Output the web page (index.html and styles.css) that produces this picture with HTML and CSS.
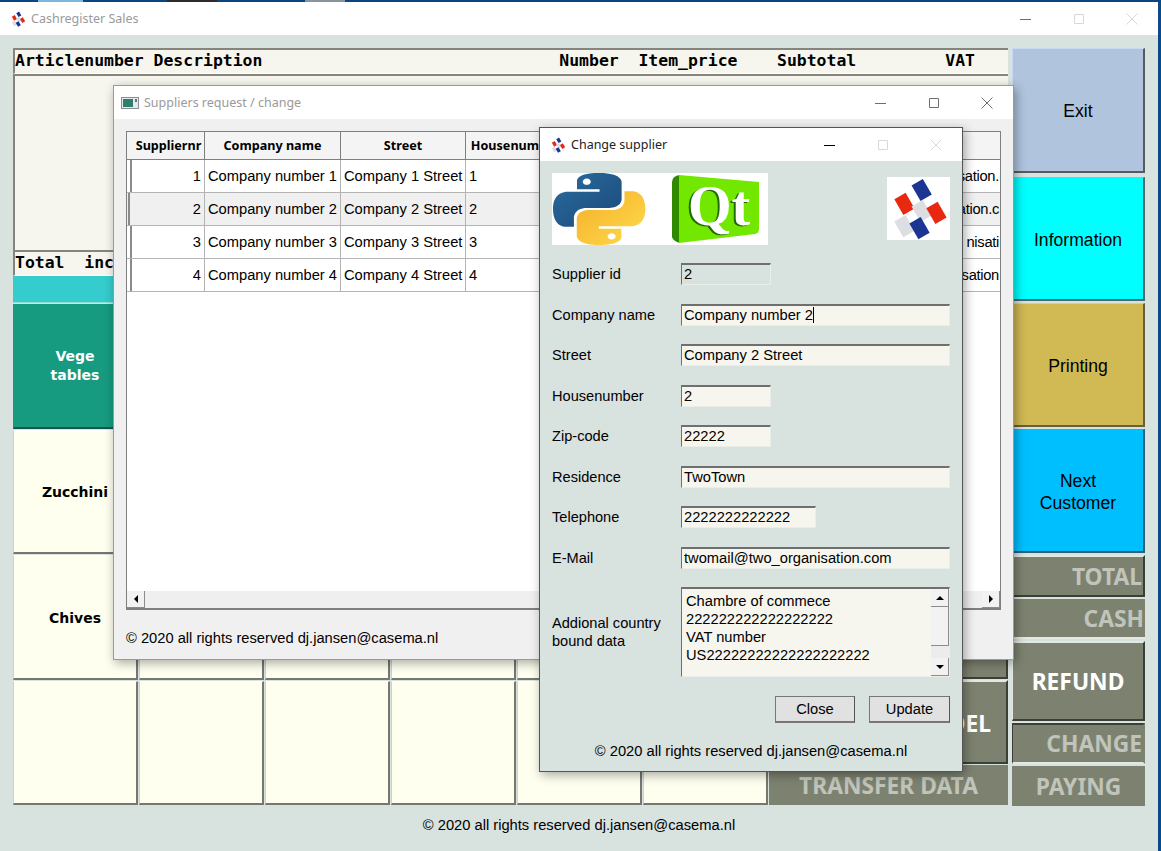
FILE: index.html
```html
<!DOCTYPE html>
<html lang="en">
<head>
    <meta charset="UTF-8">
    <title>Cashregister Sales</title>
    <link rel="stylesheet" href="styles.css">
</head>
<body>

    <svg class="defs" width="0" height="0">
        <symbol id="cash-logo" viewBox="0 0 63 63">
            <rect x="28" y="4" width="13" height="18" fill="#1c3594" transform="rotate(-30 34.7 12.7)"/>
            <rect x="11" y="18" width="13" height="18" fill="#e8290f" transform="rotate(-30 17.3 27)"/>
            <rect x="28" y="25" width="13" height="18" fill="#dcdee2" transform="rotate(-30 34.7 33.7)"/>
            <rect x="43" y="27" width="13" height="18" fill="#e8290f" transform="rotate(-30 49.3 36)"/>
            <rect x="11" y="40" width="13" height="18" fill="#dcdee2" transform="rotate(-30 17.7 49.3)"/>
            <rect x="26" y="42" width="13" height="18" fill="#1c3594" transform="rotate(-30 32.7 51)"/>
        </symbol>
        <symbol id="ctl-min" viewBox="0 0 12 12"><path d="M0 6.5H11" stroke="currentColor" fill="none"/></symbol>
        <symbol id="ctl-max" viewBox="0 0 12 12"><path d="M1.5 1.5H10.5V10.5H1.5Z" stroke="currentColor" fill="none"/></symbol>
        <symbol id="ctl-close" viewBox="0 0 12 12"><path d="M.5 .5L11.5 11.5M11.5 .5L.5 11.5" stroke="currentColor" fill="none"/></symbol>
    </svg>

    <div class="taskbar-strip">
        <span class="strip-a"></span>
        <span class="strip-b"></span>
        <span class="strip-a"></span>
        <span class="strip-c"></span>
        <span class="strip-a"></span>
        <span class="strip-d"></span>
        <span class="strip-a grow"></span>
    </div>

    <div class="screen">
        <div class="main-window">
            <div class="titlebar inactive">
                <svg class="title-icon"><use href="#cash-logo"/></svg>
                <span class="title-text">Cashregister Sales</span>
                <div class="controls">
                    <span class="ctl"><svg><use href="#ctl-min"/></svg></span>
                    <span class="ctl faint"><svg><use href="#ctl-max"/></svg></span>
                    <span class="ctl faint"><svg><use href="#ctl-close"/></svg></span>
                </div>
            </div>

            <div class="register">
                <div class="left-col">
                    <div class="mono-line">Articlenumber Description                              Number  Item_price    Subtotal         VAT</div>
                    <div class="order-list"></div>
                    <div class="mono-line">Total  inc</div>
                    <div class="scan-bar"></div>
                    <div class="products">
                        <div class="prod teal">Vege<br>tables</div>
                        <div class="prod"></div>
                        <div class="prod"></div>
                        <div class="prod"></div>
                        <div class="prod"></div>
                        <div class="prod"></div>
                        <div class="actions">
                            <div class="act"></div>
                            <div class="act"></div>
                            <div class="act"></div>
                            <div class="act"></div>
                            <div class="act"></div>
                            <div class="act"></div>
                            <div class="act"></div>
                            <div class="act bright del">DEL</div>
                            <div class="act flat wide">TRANSFER DATA</div>
                        </div>
                        <div class="prod">Zucchini</div>
                        <div class="prod"></div>
                        <div class="prod"></div>
                        <div class="prod"></div>
                        <div class="prod"></div>
                        <div class="prod"></div>
                        <div class="prod">Chives</div>
                        <div class="prod"></div>
                        <div class="prod"></div>
                        <div class="prod"></div>
                        <div class="prod"></div>
                        <div class="prod"></div>
                        <div class="prod"></div>
                        <div class="prod"></div>
                        <div class="prod"></div>
                        <div class="prod"></div>
                        <div class="prod"></div>
                        <div class="prod"></div>
                    </div>
                </div>

                <div class="right-col">
                    <div class="side exit">Exit</div>
                    <div class="side info">Information</div>
                    <div class="side print">Printing</div>
                    <div class="side next">Next<br>Customer</div>
                    <div class="act right">TOTAL</div>
                    <div class="act right lit">CASH</div>
                    <div class="act bright">REFUND</div>
                    <div class="act right sunk">CHANGE</div>
                    <div class="act flat">PAYING</div>
                </div>
            </div>

            <div class="copyright">© 2020 all rights reserved dj.jansen@casema.nl</div>
        </div>
    </div>

    <!-- Suppliers window -->
    <div class="window suppliers">
        <div class="titlebar inactive">
            <svg class="title-icon" viewBox="0 0 18 16">
                <rect x=".5" y="2.5" width="17" height="11" fill="#e8e8e8" stroke="#8a8f94"/>
                <rect x="2" y="4" width="10" height="8" fill="#2f7f6f"/>
                <rect x="14" y="4" width="2" height="3" fill="#3a7fa8"/>
            </svg>
            <span class="title-text">Suppliers request / change</span>
            <div class="controls">
                <span class="ctl"><svg><use href="#ctl-min"/></svg></span>
                <span class="ctl"><svg><use href="#ctl-max"/></svg></span>
                <span class="ctl"><svg><use href="#ctl-close"/></svg></span>
            </div>
        </div>
        <div class="suppliers-body">
            <div class="grid-table">
                <div class="tbl-head">
                    <div class="th c1">Suppliernr</div>
                    <div class="th c2">Company name</div>
                    <div class="th c3">Street</div>
                    <div class="th c4">Housenumber</div>
                    <div class="th c5"></div>
                </div>
                <div class="tbl-row">
                    <div class="td c1 num">1</div>
                    <div class="td c2">Company number 1</div>
                    <div class="td c3">Company 1 Street</div>
                    <div class="td c4">1</div>
                    <div class="td c5">sation.</div>
                </div>
                <div class="tbl-row selected">
                    <div class="td c1 num">2</div>
                    <div class="td c2">Company number 2</div>
                    <div class="td c3">Company 2 Street</div>
                    <div class="td c4">2</div>
                    <div class="td c5">ation.c</div>
                </div>
                <div class="tbl-row">
                    <div class="td c1 num">3</div>
                    <div class="td c2">Company number 3</div>
                    <div class="td c3">Company 3 Street</div>
                    <div class="td c4">3</div>
                    <div class="td c5">nisati</div>
                </div>
                <div class="tbl-row">
                    <div class="td c1 num">4</div>
                    <div class="td c2">Company number 4</div>
                    <div class="td c3">Company 4 Street</div>
                    <div class="td c4">4</div>
                    <div class="td c5">sation</div>
                </div>
                <div class="tbl-fill"></div>
                <div class="hscroll">
                    <span class="sbtn"><i class="arrow-left"></i></span>
                    <span class="sbtn"><i class="arrow-right"></i></span>
                </div>
            </div>
            <div class="suppliers-foot">© 2020 all rights reserved dj.jansen@casema.nl</div>
        </div>
    </div>

    <!-- Change supplier dialog -->
    <div class="window dialog">
        <div class="titlebar">
            <svg class="title-icon"><use href="#cash-logo"/></svg>
            <span class="title-text">Change supplier</span>
            <div class="controls">
                <span class="ctl dark"><svg><use href="#ctl-min"/></svg></span>
                <span class="ctl faint"><svg><use href="#ctl-max"/></svg></span>
                <span class="ctl faint"><svg><use href="#ctl-close"/></svg></span>
            </div>
        </div>
        <div class="dialog-body">
            <div class="logos">
                <svg class="logo-pair" viewBox="0 0 216 72">
                    <defs>
                        <linearGradient id="py-blue" x1="0" y1="0" x2="1" y2="1">
                            <stop offset="0" stop-color="#2a6ba0"/>
                            <stop offset="1" stop-color="#1b4a78"/>
                        </linearGradient>
                        <linearGradient id="py-yellow" x1="0" y1="0" x2="1" y2="1">
                            <stop offset="0" stop-color="#ffdc4a"/>
                            <stop offset="1" stop-color="#f4ae2c"/>
                        </linearGradient>
                    </defs>
                    <rect width="216" height="72" fill="#fff"/>
                    <g transform="translate(1 0) scale(.84 .655)">
                        <path fill="url(#py-blue)" d="M54.9 0c-28 0-26.3 12.2-26.3 12.2l0 12.6h26.8v3.8H17.9S0 26.6 0 54.9c0 28.3 15.6 27.3 15.6 27.3h9.3V69s-.5-15.6 15.4-15.6h26.5s14.9.2 14.9-14.4V14.9S84 0 54.9 0zm-14.7 8.5c2.7 0 4.8 2.2 4.8 4.8s-2.2 4.8-4.8 4.8-4.8-2.2-4.8-4.8 2.1-4.8 4.8-4.8z"/>
                        <path fill="url(#py-yellow)" transform="rotate(180 55 55)" d="M54.9 0c-28 0-26.3 12.2-26.3 12.2l0 12.6h26.8v3.8H17.9S0 26.6 0 54.9c0 28.3 15.6 27.3 15.6 27.3h9.3V69s-.5-15.6 15.4-15.6h26.5s14.9.2 14.9-14.4V14.9S84 0 54.9 0zm-14.7 8.5c2.7 0 4.8 2.2 4.8 4.8s-2.2 4.8-4.8 4.8-4.8-2.2-4.8-4.8 2.1-4.8 4.8-4.8z"/>
                    </g>
                    <path d="M120 9Q120 3 128 2V70Q121 68 120 64Z" fill="#2f8a00"/>
                    <path d="M127 2L207 9V56Q207 60 203 61L127 70Z" fill="#72e800"/>
                    <text class="qt-shadow" x="134" y="53">Qt</text>
                    <text class="qt-text" x="136" y="52">Qt</text>
                </svg>
                <div class="logo-box"><svg><use href="#cash-logo"/></svg></div>
            </div>

            <div class="form">
                <div class="lbl">Supplier id</div>
                <div class="field readonly w-id">2</div>
                <div class="lbl">Company name</div>
                <div class="field w-full"><span class="caret">Company number 2</span></div>
                <div class="lbl">Street</div>
                <div class="field w-full">Company 2 Street</div>
                <div class="lbl">Housenumber</div>
                <div class="field w-id">2</div>
                <div class="lbl">Zip-code</div>
                <div class="field w-id">22222</div>
                <div class="lbl">Residence</div>
                <div class="field w-full">TwoTown</div>
                <div class="lbl">Telephone</div>
                <div class="field w-tel">2222222222222</div>
                <div class="lbl">E-Mail</div>
                <div class="field w-full">twomail@two_organisation.com</div>
                <div class="lbl multi">Addional country<br>bound data</div>
                <div class="memo">
                    <div class="memo-text">Chambre of commece<br>222222222222222222<br>VAT number<br>US22222222222222222222</div>
                    <div class="vscroll">
                        <span class="sbtn tall"><i class="arrow-up"></i></span>
                        <span class="thumb"></span>
                        <span class="vtrack"></span>
                        <span class="sbtn tall"><i class="arrow-down"></i></span>
                    </div>
                </div>
            </div>

            <div class="buttons">
                <div class="btn">Close</div>
                <div class="btn default">Update</div>
            </div>
            <div class="dialog-foot">© 2020 all rights reserved dj.jansen@casema.nl</div>
        </div>
    </div>

</body>
</html>
```

FILE: styles.css
```css
:root
{
    --panel: #d8e2df;
    --olive: #7d8270;
    --cream: #fffff0;
    --linen: #f6f6ee;
    --dim: #c0c4ba;
}

*
{
    box-sizing: border-box;
    padding: 0;
    margin: 0;
}

body
{
    width: 1161px;
    height: 851px;
    overflow: hidden;
    position: relative;
    font-family: "Liberation Sans", Arial, sans-serif;
    font-size: 14.7px;
    color: #000;
    background-color: #0b4a8a;
}

.defs
{
    position: absolute;
}

.taskbar-strip
{
    display: flex;
    height: 2px;
}

.taskbar-strip span { display: block; }
.strip-a { background-color: #0c4382; width: 38px; }
.strip-b { background-color: #7fb4dc; width: 45px; }
.strip-a:nth-child(3) { width: 84px; }
.strip-c { background-color: #2c2c2c; width: 50px; }
.strip-a:nth-child(5) { width: 88px; }
.strip-d { background-color: #8a94a0; width: 40px; }
.taskbar-strip .grow { flex: 1; }

.screen
{
    width: 1158px;
    height: 849px;
}

.main-window
{
    display: flex;
    flex-flow: column nowrap;
    height: 100%;
    background-color: var(--panel);
}

/* title bars */

.titlebar
{
    display: flex;
    align-items: center;
    flex: none;
    height: 33px;
    padding-left: 10px;
    background-color: #fff;
}

.title-icon
{
    width: 16px;
    height: 16px;
    flex: none;
}

.title-text
{
    margin-left: 5px;
    font-family: "Noto Sans", sans-serif;
    font-size: 12.5px;
    color: #222;
}

.inactive .title-text { color: #9a9a9a; }

.controls
{
    display: flex;
    margin-left: auto;
}

.ctl
{
    display: flex;
    justify-content: center;
    align-items: center;
    width: 53px;
    color: #6e6e6e;
}

.ctl svg
{
    width: 12px;
    height: 12px;
}

.ctl.dark { color: #000; }
.ctl.faint { color: #d8d8d8; }

/* register */

.register
{
    display: flex;
    gap: 4px;
    padding: 13px 0 0 13px;
}

.left-col
{
    display: flex;
    flex-flow: column nowrap;
    width: 995px;
}

.mono-line
{
    height: 26px;
    overflow: hidden;
    white-space: pre;
    font-family: "DejaVu Sans Mono", monospace;
    font-size: 16.45px;
    font-weight: bold;
    line-height: 22px;
    background-color: var(--linen);
    border-top: 2px solid #85857d;
    border-left: 2px solid #85857d;
    border-bottom: 1px solid #fff;
}

.order-list
{
    height: 176px;
    background-color: var(--linen);
    border-top: 2px solid #85857d;
    border-left: 2px solid #85857d;
}

.scan-bar
{
    height: 27px;
    background-color: #34cccc;
    border-bottom: 1px solid #8fdcd8;
}

.products
{
    display: grid;
    grid-template-columns: repeat(6, 125px) 1fr;
    grid-template-rows: repeat(4, 124.5px);
    gap: 1px;
    margin-top: 1px;
}

.prod
{
    display: flex;
    justify-content: center;
    align-items: center;
    padding-top: 3px;
    text-align: center;
    font-family: "DejaVu Sans", sans-serif;
    font-size: 14px;
    font-weight: bold;
    line-height: 19px;
    background-color: var(--cream);
    border-top: 1px solid #fff;
    border-left: 1px solid #d0d0c8;
    border-right: 2px solid #77776f;
    border-bottom: 2px solid #77776f;
}

.prod.teal
{
    padding-top: 1px;
    color: #fff;
    background-color: #169a80;
    border-color: #169a80;
    border-bottom-color: #14574b;
}

.actions
{
    grid-column: 7;
    grid-row: 1 / span 4;
    align-self: start;
    display: grid;
    grid-template-columns: 1fr 1fr;
    grid-template-rows: 124px 124px 125px 84px 40px;
    gap: 1px;
}

.act
{
    display: flex;
    justify-content: center;
    align-items: center;
    font-family: "Noto Sans", sans-serif;
    font-size: 22.8px;
    font-weight: bold;
    color: var(--dim);
    background-color: var(--olive);
    border-top: 2px solid #e4e8e2;
    border-left: 1px solid #e4e8e2;
    border-right: 2px solid #3c3f35;
    border-bottom: 2px solid #3c3f35;
}

.act.bright { color: #fff; }
.act.flat { border: 0; }
.act.wide { grid-column: 1 / span 2; }

.act.del
{
    justify-content: flex-end;
    padding-right: 15px;
    padding-top: 3px;
}

.act.right
{
    justify-content: flex-end;
    padding-right: 1px;
}

.act.lit
{
    border-top: 0;
    border-left: 0;
    border-right: 0;
    border-bottom-color: #e4e8e2;
}

.act.sunk
{
    border-top-color: #3c3f35;
    border-left-color: #3c3f35;
    border-right-color: var(--olive);
    border-bottom-color: #e4e8e2;
}

.right-col
{
    display: grid;
    grid-template-rows: 127px 124px 124px 124px 42px 40px 80px 41px 40px;
    gap: 2px;
    width: 133px;
}

.side
{
    display: flex;
    justify-content: center;
    align-items: center;
    padding-top: 2px;
    text-align: center;
    font-size: 17.6px;
    line-height: 22px;
    border-top: 1px solid #c8d8ee;
    border-left: 1px solid #c8d8ee;
    border-right: 2px solid #555b60;
    border-bottom: 2px solid #555b60;
}

.exit { background-color: #b0c4de; margin-bottom: 2px; }
.info { background-color: #00ffff; border-color: #00ffff #4d6a6a #4d6a6a #00ffff; }
.print { background-color: #d1b954; border-color: #e0d088 #66603c #66603c #e0d088; }
.next { background-color: #00bfff; border-color: #00bfff #2c5f78 #2c5f78 #00bfff; }

.copyright
{
    margin-top: 11px;
    text-align: center;
}

/* floating windows */

.window
{
    position: absolute;
    display: flex;
    flex-flow: column nowrap;
    border: 1px solid #9a9a9a;
    box-shadow: 2px 3px 10px rgba(0, 0, 0, 0.35);
}

.suppliers
{
    left: 113px;
    top: 85px;
    width: 901px;
    height: 575px;
}

.suppliers .titlebar { padding-left: 7px; }
.suppliers .title-icon { width: 18px; }

.suppliers-body
{
    flex: 1;
    display: flex;
    flex-flow: column nowrap;
    padding: 12px 12px 0 12px;
    background-color: #f0f0f0;
}

.grid-table
{
    display: flex;
    flex-flow: column nowrap;
    height: 479px;
    background-color: #fff;
    border: 1px solid #7f7f7f;
    border-bottom-width: 2px;
}

.tbl-head,
.tbl-row
{
    display: flex;
    flex: none;
}

.tbl-head
{
    height: 28px;
    padding-left: 3px;
    background-color: #f4f4f4;
    border-bottom: 1px solid #7f7f7f;
}

.th
{
    display: flex;
    justify-content: center;
    align-items: center;
    overflow: hidden;
    white-space: nowrap;
    font-family: "Noto Sans", sans-serif;
    font-size: 12.6px;
    font-weight: bold;
    border-right: 1px solid #7f7f7f;
}

.th.c1 { padding-left: 3px; }
.th.c5 { border-right: 0; }

.tbl-row
{
    height: 33px;
    padding-left: 3px;
    border-bottom: 1px solid #b4b4b4;
}

.tbl-row.selected
{
    padding-left: 1px;
    background-color: #f0f0f0;
}

.td
{
    display: flex;
    align-items: center;
    overflow: hidden;
    white-space: nowrap;
    padding: 0 3px;
    border-right: 1px solid #b4b4b4;
}

.td.num { justify-content: flex-end; }
.td.c1 { border-left: 2px solid #8a8a8a; }
.selected .td.c1 { width: 77px; }
.td.c5 { justify-content: flex-end; border-right: 0; padding-right: 1px; letter-spacing: -0.3px; }

.c1 { width: 75px; }
.c2 { width: 136px; }
.c3 { width: 125px; }
.c4 { width: 100px; flex: none; }
.c5 { width: 434px; flex: none; }

.tbl-fill { flex: 1; }

.hscroll
{
    display: flex;
    justify-content: space-between;
    flex: none;
    height: 17px;
    background-color: #efefef;
}

.sbtn
{
    display: flex;
    justify-content: center;
    align-items: center;
    width: 18px;
    height: 17px;
    background-color: #f2f2f2;
    border-right: 1px solid #8c8c8c;
    border-bottom: 1px solid #8c8c8c;
}

.arrow-left,
.arrow-right,
.arrow-up,
.arrow-down
{
    display: block;
    width: 0;
    height: 0;
    border: 4px solid transparent;
}

.arrow-left { border-right-color: #000; border-left-width: 0; }
.arrow-right { border-left-color: #000; border-right-width: 0; }
.arrow-up { border-bottom-color: #000; border-top-width: 0; }
.arrow-down { border-top-color: #000; border-bottom-width: 0; }

.suppliers-foot
{
    margin-top: 20px;
}

.dialog
{
    left: 539px;
    top: 127px;
    width: 424px;
    height: 645px;
    border-color: #555;
}

.dialog-body
{
    flex: 1;
    display: flex;
    flex-flow: column nowrap;
    padding: 12px 12px 0 12px;
    background-color: var(--panel);
}

.logos
{
    display: flex;
    justify-content: space-between;
    align-items: flex-start;
    height: 90px;
}

.logo-pair
{
    width: 216px;
    height: 72px;
}

.logo-box
{
    width: 63px;
    height: 63px;
    margin-top: 4px;
    background-color: #fff;
}

.logo-box svg
{
    display: block;
    width: 63px;
    height: 63px;
}

.qt-text,
.qt-shadow
{
    font-family: "Liberation Serif", serif;
    font-size: 56px;
    font-weight: bold;
}

.qt-text { fill: #fff; }
.qt-shadow { fill: #1f6b00; }

.form
{
    display: grid;
    grid-template-columns: 129px 1fr;
    grid-auto-rows: 22px;
    row-gap: 18.5px;
    align-items: center;
}

.lbl
{
    font-size: 14.6px;
}

.lbl.multi { align-self: start; padding-top: 27px; line-height: 18px; }

.field
{
    height: 22px;
    padding-left: 2px;
    line-height: 19px;
    background-color: var(--linen);
    border-top: 2px solid #6f6f6f;
    border-left: 1px solid #6f6f6f;
    border-right: 1px solid #e9eee8;
    border-bottom: 1px solid #e9eee8;
}

.field.readonly { background-color: var(--panel); }
.w-id { width: 90px; }
.w-tel { width: 135px; }
.w-full { width: 269px; }

.caret { border-right: 1px solid #000; }

.memo
{
    display: flex;
    align-self: start;
    height: 90px;
    width: 269px;
    background-color: var(--linen);
    border-top: 2px solid #6f6f6f;
    border-left: 1px solid #6f6f6f;
    border-right: 1px solid #e9eee8;
    border-bottom: 1px solid #e9eee8;
}

.memo-text
{
    flex: 1;
    padding: 3px 0 0 4px;
    line-height: 18px;
    white-space: nowrap;
}

.vscroll
{
    display: flex;
    flex-flow: column nowrap;
    width: 18px;
}

.sbtn.tall { height: 18px; }

.thumb
{
    height: 39px;
    background-color: #f2f2f2;
    border-right: 1px solid #8c8c8c;
    border-bottom: 1px solid #8c8c8c;
}

.vtrack
{
    flex: 1;
    background-color: #ececec;
}

.buttons
{
    display: flex;
    justify-content: flex-end;
    gap: 14px;
    margin-top: 87px;
}

.btn
{
    width: 80px;
    height: 27px;
    text-align: center;
    line-height: 25px;
    background-color: #e1e1e1;
    border: 1px solid #777;
    border-right-color: #555;
    border-bottom-width: 2px;
}

.btn.default { width: 81px; }

.dialog-foot
{
    margin-top: 20px;
    text-align: center;
}
```
